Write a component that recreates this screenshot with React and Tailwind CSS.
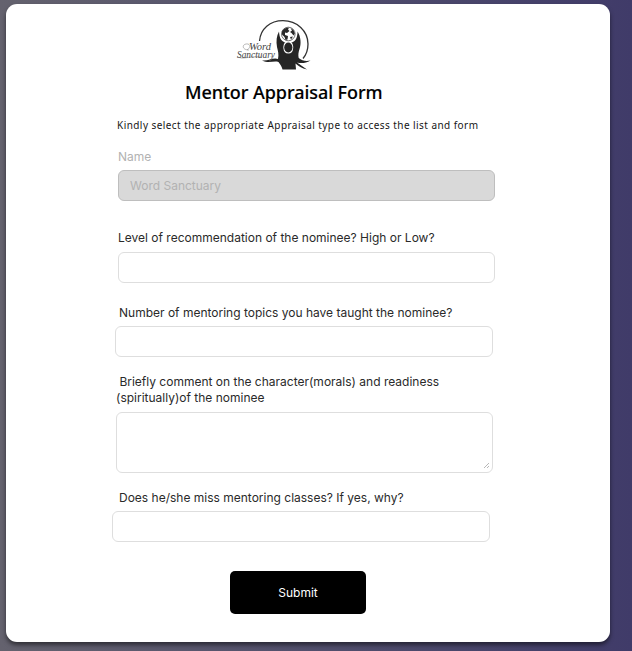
function Logo() {
  return (
    <svg className="block h-[52px] w-[76px] shrink-0" viewBox="0 0 76 52" role="img" aria-label="Word Sanctuary">
      <path d="M23.500 22C24.500 10 34 1.700 47 1.700C61 1.700 72 12 72 25C72 31 70 36 67 39.500" fill="none" stroke="#333" strokeWidth="1.300" />
      <path d="M43 12.500C43.500 19 45 22 49 23.500H56C60 22 61.300 18.500 61.600 12.500C65 18 65.300 25 63.500 30C62.500 33 62 36 62.700 39C66 42 70.500 42.500 74.500 41.500C69.500 44.500 65 44.500 61 43.500L71 50.500C66 49.500 62 47 59.500 44.500L60 50.500H46.500C46 48 44.500 45.500 42.500 43C37 41.500 33 45 26 41.500C33 42.200 37.500 38 42 40C43 35.500 42 32 41 28C40 22 40.500 17 43 12.500Z" fill="#252525" />
      <path d="M52.300 22.300C55.500 22.300 57.400 25 57.200 29C57 32.700 55.200 34.500 52.300 34.500C49.400 34.500 47.600 32.700 47.400 29C47.200 25 49 22.300 52.300 22.300Z" fill="#fff" />
      <ellipse cx="52.300" cy="28.500" rx="4.100" ry="4.900" fill="#252525" />
      <circle cx="52.300" cy="15" r="6.800" fill="#fff" stroke="#333" strokeWidth="0.700" />
      <path d="M46 12.500C47 9.800 50 8.300 53 8.700L52 10.500L53.500 12L51 14L49 13.500L49 16L52 17L51.500 20.500L49.500 21L48.500 18L46 15.500Z M54.500 9L57.500 11L58.800 14.500L57.500 16.500L55.500 14L54 13L56 11.500Z M54 18L57 17.500L55 20.500Z" fill="#292929" />
      <path d="M13 31C5 31 6 24 12 25C15 26 14 29 11 31M1 37C5 42 16 36 24 38M35 37Q37 41 33 42" fill="none" stroke="#777" strokeWidth="0.500" />
      <g fill="#444" fontFamily="Liberation Serif, serif" fontStyle="italic">
        <text x="13" y="30.500" fontSize="10.500" textLength="22" lengthAdjust="spacingAndGlyphs">Word</text>
        <text x="1" y="39" fontSize="9.500" textLength="38" lengthAdjust="spacingAndGlyphs">Sanctuary</text>
      </g>
    </svg>
  );
}

const label = "block whitespace-pre text-[12px] leading-[16px] text-[#2a2a2a]";
const field = "block rounded-[6px] border border-[#dedede] bg-white outline-none";

export default function App() {
  return (
    <div className="h-[651px] w-[632px] overflow-hidden bg-linear-to-r from-[#64626e] to-[#403b69] pt-[4px] pl-[6px] font-['Inter',sans-serif]">
      <main className="h-[638px] w-[604px] rounded-[11px] bg-white pt-[15px] shadow-[0_3px_4px_rgba(0,0,0,0.5)]">
        <div className="pl-[230px]"><Logo /></div>
        <h1 className="mt-[8px] pl-[179px] font-['Noto_Sans',sans-serif] text-[18px] leading-[26px] font-medium tracking-[-0.05px] whitespace-nowrap text-black [-webkit-text-stroke:0.15px_black]">Mentor Appraisal Form</h1>
        <p className="mt-[12px] pl-[111px] font-['Noto_Sans',sans-serif] text-[10px] leading-[16px] tracking-[0.44px] whitespace-nowrap text-[#161616]">Kindly select the appropriate Appraisal type to access the list and form</p>
        <form className="flex flex-col items-start">
          <label className="mt-[16px] ml-[112px] block text-[12px] leading-[16px] text-[#b2b2b2]">Name</label>
          <input disabled defaultValue="Word Sanctuary" className="mt-[5px] ml-[112px] block h-[31px] w-[377px] rounded-[6px] border border-[#bebebe] bg-[#d9d9d9] px-[11px] text-[12px] text-[#b2b2b2]" />
          <label className={`${label} mt-[29px] ml-[112px]`}>Level of recommendation of the nominee? High or Low?</label>
          <input className={`${field} mt-[6px] ml-[112px] h-[31px] w-[377px]`} />
          <label className={`${label} mt-[22px] ml-[113px]`}>Number of mentoring topics you have taught the nominee?</label>
          <input className={`${field} mt-[5px] ml-[109px] h-[31px] w-[378px]`} />
          <label className={`${label} mt-[17px] ml-[110px]`}>{" Briefly comment on the character(morals) and readiness\n(spiritually)of the nominee"}</label>
          <div className="relative mt-[6px] ml-[110px]">
            <textarea className={`${field} h-[61px] w-[377px] resize-none`} />
            <svg className="absolute right-[3px] bottom-[4px] h-[7px] w-[7px]" viewBox="0 0 7 7" fill="none" stroke="#999" strokeWidth="0.700">
              <path d="M1 6L6 1M4 6L6 4" />
            </svg>
          </div>
          <label className={`${label} mt-[17px] ml-[113px]`}>Does he/she miss mentoring classes? If yes, why?</label>
          <input className={`${field} mt-[5px] ml-[106px] h-[31px] w-[378px]`} />
          <button type="button" className="mt-[29px] ml-[224px] h-[43px] w-[136px] rounded-[5px] bg-black text-[12px] text-white">Submit</button>
        </form>
      </main>
    </div>
  );
}
